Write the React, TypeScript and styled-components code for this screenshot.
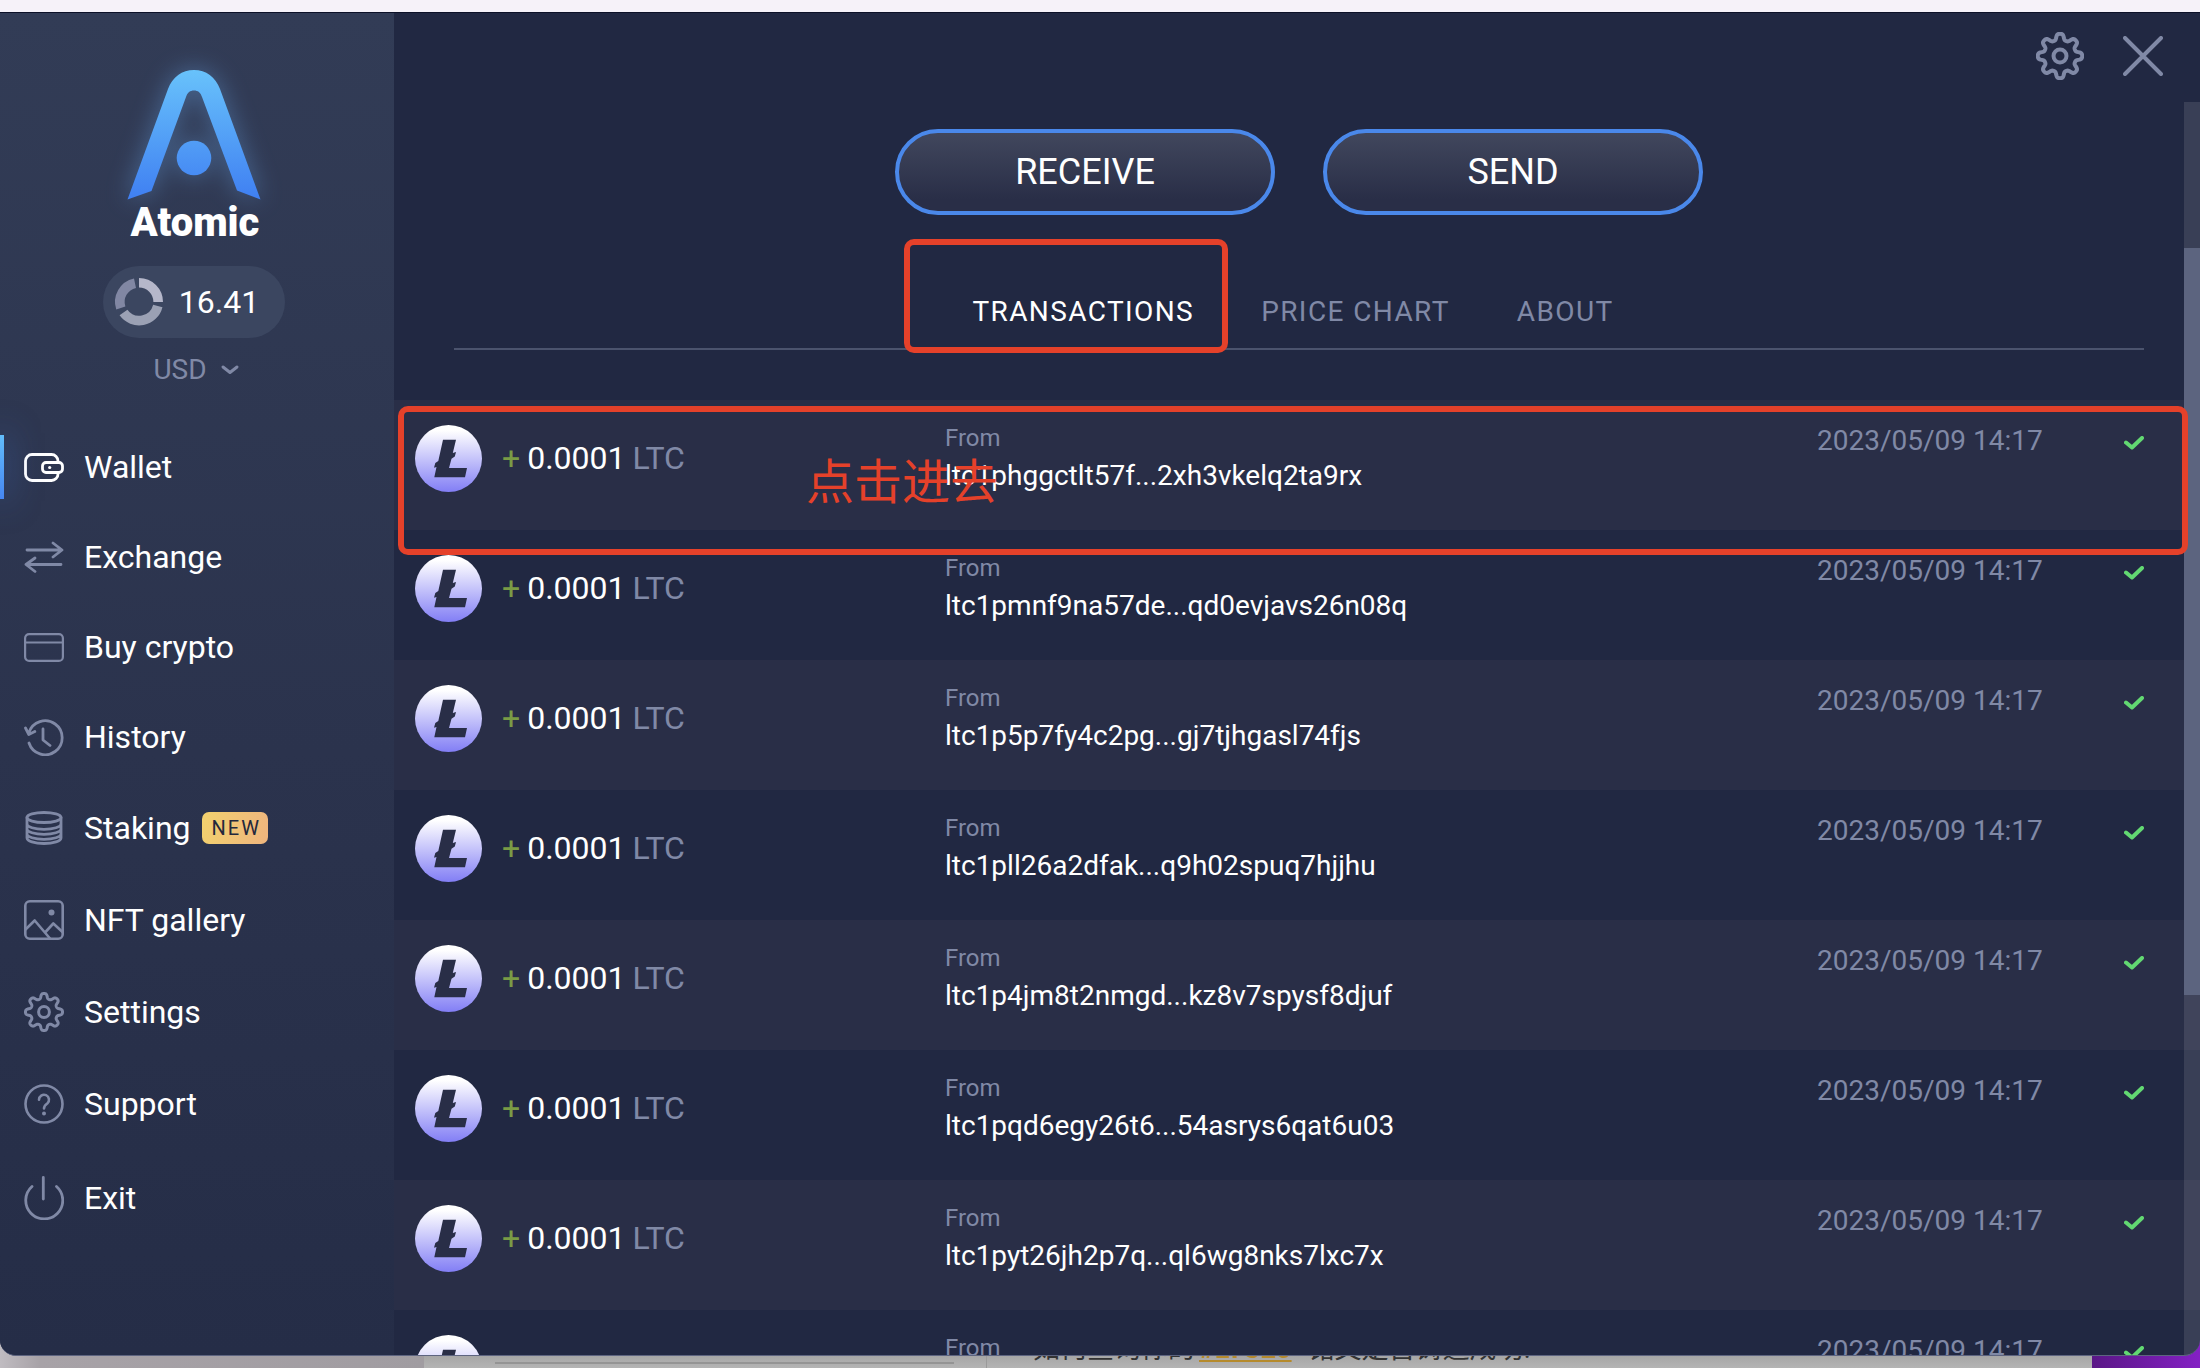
import React from "react";
import styled, { createGlobalStyle, css } from "styled-components";

const colors = {
  panel: "#212842",
  rowAlt: "#292e47",
  muted: "#8089a6",
  line: "#4b536d",
  blue: "#4a88ea",
  mark: "#e5412a",
  green: "#62d872",
  plus: "#7a9b45",
};

const GlobalStyle = createGlobalStyle`
  *, *::before, *::after { box-sizing: border-box; }
  body {
    margin: 0;
    overflow: hidden;
    background: #f6f2f9;
    font-family: Roboto, "Noto Sans CJK SC", sans-serif;
    color: #ffffff;
  }
  button { font: inherit; color: inherit; background: none; border: 0; padding: 0; cursor: pointer; }
  a { color: inherit; text-decoration: none; }
  svg { display: block; }
`;

/* ---------- desktop ---------- */

const Desktop = styled.div`
  display: grid;
  grid-template: 100vh / minmax(0, 1fr);
  > * { grid-area: 1 / 1; }
`;

const Backdrop = styled.div`
  align-self: end;
  height: 40px;
  display: grid;
  grid-template-columns: 424px minmax(0, 1fr) 108px;
  overflow: hidden;
`;

const BackdropEdge = styled.div`
  background: linear-gradient(90deg, #c0bcc1 0, #a7a2a7 40px, #a09ca1 100%);
`;

const BackdropPage = styled.div`
  display: grid;
  grid-template-columns: 563px minmax(0, 1fr);
  background: linear-gradient(#a6a6a6 28px, #b4b4b4 40px);
`;

const BackdropColumn = styled.div`
  border-right: 1px solid #9a9a9a;
  padding: 34px 32px 0 71px;
`;

const BackdropRule = styled.div`
  height: 2px;
  background: #949494;
`;

const BackdropText = styled.p`
  margin: 0;
  padding: 8px 0 0 46px;
  font-size: 27px;
  line-height: 26px;
  white-space: nowrap;
  color: #333333;
  a {
    margin: 0 16px 0 4px;
    font-weight: 700;
    color: #b58a2c;
    text-decoration: underline;
    text-decoration-thickness: 2px;
    text-underline-offset: 2px;
  }
`;

const BackdropAccent = styled.div`
  background: linear-gradient(90deg, #5a1786, #8420c4);
`;

const AppWindow = styled.div`
  position: relative;
  margin: 12px 0;
  display: grid;
  grid-template-columns: 394px minmax(0, 1fr);
  border-top: 1px solid #0c1128;
  border-bottom: 1px solid #5d6480;
  border-radius: 0 0 16px 16px;
  overflow: hidden;
  background: ${colors.panel};
`;

/* ---------- sidebar ---------- */

const Sidebar = styled.aside`
  display: flex;
  flex-direction: column;
  align-items: stretch;
  background: linear-gradient(#323c56, #2b334d 55%, #252d47);
`;

const Brand = styled.div`
  display: flex;
  flex-direction: column;
  align-items: center;
  padding: 57px 6px 0 0;
  svg { overflow: visible; }
`;

const BrandName = styled.div`
  margin-top: 1px;
  padding-left: 2px;
  font-size: 40px;
  line-height: 44px;
  font-weight: 900;
`;

const Balance = styled.button`
  display: flex;
  align-items: center;
  gap: 16px;
  height: 72px;
  margin-top: 21px;
  padding: 0 26px 0 12px;
  border-radius: 36px;
  background: #3b4660;
  font-size: 32px;
  line-height: 38px;
`;

const Currency = styled.button`
  display: flex;
  align-items: center;
  gap: 14px;
  margin-top: 16px;
  padding-left: 4px;
  font-size: 28px;
  line-height: 32px;
  color: ${colors.muted};
`;

const Nav = styled.nav`
  display: flex;
  flex-direction: column;
  margin-top: 36px;
`;

const NavLink = styled.a<{ $active?: boolean }>`
  position: relative;
  display: flex;
  align-items: center;
  gap: 20px;
  padding: 26px 24px;
  font-size: 32px;
  line-height: 38px;
  svg { color: ${(p) => (p.$active ? "#ffffff" : colors.muted)}; }
  ${(p) =>
    p.$active &&
    css`
      &::before {
        content: "";
        position: absolute;
        left: 0;
        top: 13px;
        bottom: 13px;
        width: 4px;
        background: linear-gradient(#62bdfb, #4686f2);
        box-shadow: 0 0 32px 2px rgba(70, 134, 242, 0.5);
      }
    `}
`;

const NavLabel = styled.span`
  display: flex;
  align-items: center;
  gap: 11px;
`;

const Badge = styled.span`
  margin: 4px 0;
  padding: 0 7px 0 10px;
  border-radius: 7px;
  background: linear-gradient(100deg, #f2d16e, #efb57e);
  color: #23283c;
  font-size: 20px;
  line-height: 32px;
  letter-spacing: 2px;
`;

/* ---------- main ---------- */

const Main = styled.main`
  display: grid;
  grid-template-rows: 89px minmax(0, 1fr);
  min-height: 0;
`;

const TopBar = styled.header`
  display: flex;
  justify-content: flex-end;
  align-items: center;
  gap: 39px;
  padding: 0 37px 4px 0;
  color: ${colors.muted};
`;

const Content = styled.div`
  position: relative;
  min-height: 0;
  overflow: hidden;
`;

const Scrollbar = styled.div`
  position: absolute;
  z-index: 1;
  top: 0;
  right: 0;
  bottom: 0;
  width: 16px;
  padding-top: 146px;
  background: rgba(255, 255, 255, 0.11);
`;

const Thumb = styled.div`
  height: 67.5%;
  background: #5c647f;
`;

const Overview = styled.section`
  padding: 27px 56px 0 60px;
`;

const Actions = styled.div`
  display: flex;
  justify-content: center;
  gap: 48px;
`;

const ActionButton = styled.button`
  width: 380px;
  height: 86px;
  border: 4px solid ${colors.blue};
  border-radius: 43px;
  background: linear-gradient(#41475d, #292e47 85%);
  font-size: 36px;
  line-height: 40px;
`;

const Tabs = styled.div`
  display: flex;
  justify-content: center;
  gap: 67px;
  padding: 81px 12px 20px 0;
  border-bottom: 2px solid ${colors.line};
`;

const Tab = styled.button<{ $active?: boolean }>`
  position: relative;
  font-size: 28px;
  line-height: 32px;
  letter-spacing: 0.05em;
  color: ${(p) => (p.$active ? "#ffffff" : colors.muted)};
`;

const Mark = styled.span`
  position: absolute;
  z-index: 2;
  border: 6px solid ${colors.mark};
  border-radius: 10px;
  pointer-events: none;
`;

const TabMark = styled(Mark)`
  inset: -57px -34px -25px -68px;
`;

const Transactions = styled.section`
  position: relative;
  margin-top: 50px;
`;

const RowMark = styled(Mark)`
  top: 6px;
  left: 4px;
  right: 12px;
  height: 149px;
`;

const MarkText = styled.span`
  position: absolute;
  top: 43px;
  left: 412px;
  font-size: 48px;
  line-height: 70px;
  font-family: "Noto Sans CJK SC", sans-serif;
  color: ${colors.mark};
`;

const Table = styled.table`
  width: 100%;
  table-layout: fixed;
  border-collapse: collapse;
  tr { height: 130px; }
  tr:nth-child(odd) { background: ${colors.rowAlt}; }
  td { vertical-align: top; padding: 0; white-space: nowrap; }
`;

const CoinCell = styled.td`
  svg { margin: 25px 0 0 21px; }
`;

const Amount = styled.div`
  display: flex;
  gap: 7px;
  margin-top: 39px;
  font-size: 32px;
  line-height: 38px;
`;

const Plus = styled.span`
  color: ${colors.plus};
`;

const Unit = styled.span`
  color: ${colors.muted};
`;

const Label = styled.div`
  margin-top: 24px;
  font-size: 24px;
  line-height: 28px;
  color: ${colors.muted};
`;

const Address = styled.div`
  margin-top: 8px;
  font-size: 28px;
  line-height: 32px;
`;

const When = styled.time`
  display: block;
  margin-top: 25px;
  font-size: 28px;
  line-height: 32px;
  color: ${colors.muted};
`;

const StatusCell = styled.td`
  color: ${colors.green};
  svg { margin-top: 36px; }
`;

/* ---------- icons ---------- */

const gearPath = (c: number, mid: number, amp: number) => {
  const k = 1.7;
  const pts: string[] = [];
  for (let i = 0; i < 240; i++) {
    const t = (i / 240) * Math.PI * 2;
    const r = mid + (amp * Math.tanh(k * Math.cos(8 * t))) / Math.tanh(k);
    pts.push(`${(c + r * Math.sin(t)).toFixed(2)} ${(c - r * Math.cos(t)).toFixed(2)}`);
  }
  return `M${pts.join("L")}Z`;
};

type IconProps = { w?: number; h: number; sw?: number; children: React.ReactNode };
const Icon = ({ w = 40, h, sw = 3, children }: IconProps) => (
  <svg width={w} height={h} viewBox={`0 0 ${w} ${h}`} fill="none" stroke="currentColor" strokeWidth={sw} strokeLinecap="round" strokeLinejoin="round" aria-hidden="true">
    {children}
  </svg>
);

const WalletIcon = () => (
  <Icon h={29} sw={2.8}>
    <path d="M34 9.5V8a6.5 6.5 0 0 0-6.5-6.5H8A6.5 6.5 0 0 0 1.5 8v13A6.5 6.5 0 0 0 8 27.5H27.5A6.5 6.5 0 0 0 34 21V19.5" />
    <rect x="18.5" y="9.5" width="20" height="10" rx="3.5" />
    <circle cx="25.7" cy="14.5" r="1.6" fill="currentColor" stroke="none" />
  </Icon>
);
const ExchangeIcon = () => (
  <Icon h={32} sw={2.8}>
    <path d="M3 9H37M29 2l9 7-9 7M37 23.5H3M11 17l-9 6.5 9 7" />
  </Icon>
);
const CardIcon = () => (
  <Icon h={29} sw={2.2}>
    <rect x="1.1" y="1.1" width="37.8" height="26.8" rx="4" />
    <path d="M1 9.5H39" />
  </Icon>
);
const HistoryIcon = () => (
  <Icon h={38} sw={2.8}>
    <path d="M5 14.5A17 17 0 1 1 5 25M1.5 10l3.3 6.5 6-3M19 11v11l7 5.5" />
  </Icon>
);
const CoinsIcon = () => (
  <Icon h={34} sw={2.8}>
    <ellipse cx="20" cy="6.500" rx="17" ry="5" />
    <path d="M3 6.5V27c0 3 7.6 5.5 17 5.5S37 30 37 27V6.5M3 13c0 3 7.6 5.3 17 5.3S37 16 37 13M3 18c0 3 7.6 5.3 17 5.3S37 21 37 18M3 23c0 3 7.6 5.3 17 5.3S37 26 37 23" />
  </Icon>
);
const ImageIcon = () => (
  <Icon h={40} sw={2.6}>
    <rect x="1.3" y="1.3" width="37.4" height="37.4" rx="4.5" />
    <path d="M1.5 29.5L10.7 20.5 26 38.5M21.5 32L29.3 23.5 38.5 32" />
    <circle cx="27.5" cy="12.5" r="3" fill="currentColor" stroke="none" />
  </Icon>
);
const GearIcon = ({ size = 40, sw = 3 }: { size?: number; sw?: number }) => (
  <Icon w={size} h={size} sw={sw}>
    <path d={gearPath(size / 2, size * 0.4, size * 0.0625)} />
    <circle cx={size / 2} cy={size / 2} r={size * 0.135} />
  </Icon>
);
const HelpIcon = () => (
  <Icon h={40} sw={2.6}>
    <circle cx="20" cy="20" r="18.5" />
    <path d="M15 15.8a5 5 0 1 1 8.3 3.7C21.3 21 20 21.8 20 24.5" />
    <circle cx="20" cy="29.5" r="2" fill="currentColor" stroke="none" />
  </Icon>
);
const PowerIcon = () => (
  <Icon h={44} sw={2.8}>
    <path d="M19.3 1.5V23M8 10.5A18.5 18.5 0 1 0 32.5 10.5" />
  </Icon>
);
const CloseIcon = () => (
  <Icon h={40} sw={4}>
    <path d="M2 2L38 38M38 2L2 38" />
  </Icon>
);
const ChevronIcon = () => (
  <Icon w={18} h={10} sw={3}>
    <path d="M2 2l7 5.5L16 2" />
  </Icon>
);
const CheckIcon = () => (
  <Icon w={20} h={14} sw={4}>
    <path d="M2 6.5l6 5L18 2" />
  </Icon>
);

const LogoArt = styled.svg`
  filter: drop-shadow(0 0 12px rgba(110, 175, 245, 0.4));
`;

const Logo = () => (
  <LogoArt width="134" height="130" viewBox="0 0 134 130" aria-hidden="true">
    <defs>
      <linearGradient id="logoFill" x1="0" y1="0" x2="0" y2="130" gradientUnits="userSpaceOnUse">
        <stop offset="0" stopColor="#68c2fb" />
        <stop offset="1" stopColor="#3f7ff2" />
      </linearGradient>
    </defs>
    <path fill="url(#logoFill)" d="M0.5 129.5L41 19C45.5 7 55 0 67 0S88.5 7 93 19L133.5 129.5 110 120.5 75 27C73.5 22.5 71 20.5 67 20.5S60.5 22.5 59 27L24.5 121Z" />
    <circle cx="67" cy="88" r="17.3" fill="url(#logoFill)" />
  </LogoArt>
);

const Donut = () => (
  <svg width="48" height="48" viewBox="0 0 48 48" fill="none" strokeWidth="9.6" aria-hidden="true">
    <path d="M24 4.8A19.2 19.2 0 0 1 43.2 24" stroke="#b5b7ca" />
    <path d="M42.8 28A19.2 19.2 0 0 1 8.5 34.5" stroke="#9ba1b4" />
    <path d="M5.8 30A19.2 19.2 0 0 1 20 5.2" stroke="#8187a3" />
  </svg>
);

const Litecoin = () => (
  <svg width="67" height="67" viewBox="0 0 67 67" role="img" aria-label="Litecoin">
    <defs>
      <linearGradient id="ltcFill" x1="0" y1="0" x2="0" y2="1">
        <stop offset="0.08" stopColor="#ffffff" />
        <stop offset="1" stopColor="#827ef5" />
      </linearGradient>
    </defs>
    <circle cx="33.5" cy="33.5" r="33.5" fill="url(#ltcFill)" />
    <path fill="#292e47" d="M28 14.7H41L37.8 28 41 27 39.8 31.5 36.5 33.8 34 43H52L50 52.3H19.3L21.5 42 19 42.7 20.3 38 23.3 36Z" />
  </svg>
);

/* ---------- data ---------- */

const navItems = [
  { label: "Wallet", icon: <WalletIcon />, active: true },
  { label: "Exchange", icon: <ExchangeIcon /> },
  { label: "Buy crypto", icon: <CardIcon /> },
  { label: "History", icon: <HistoryIcon /> },
  { label: "Staking", icon: <CoinsIcon />, badge: "NEW" },
  { label: "NFT gallery", icon: <ImageIcon /> },
  { label: "Settings", icon: <GearIcon /> },
  { label: "Support", icon: <HelpIcon /> },
  { label: "Exit", icon: <PowerIcon /> },
];

const addresses = [
  "ltc1phggctlt57f...2xh3vkelq2ta9rx",
  "ltc1pmnf9na57de...qd0evjavs26n08q",
  "ltc1p5p7fy4c2pg...gj7tjhgasl74fjs",
  "ltc1pll26a2dfak...q9h02spuq7hjjhu",
  "ltc1p4jm8t2nmgd...kz8v7spysf8djuf",
  "ltc1pqd6egy26t6...54asrys6qat6u03",
  "ltc1pyt26jh2p7q...ql6wg8nks7lxc7x",
  "",
];

export default function App() {
  return (
    <>
      <GlobalStyle />
      <Desktop>
        <Backdrop>
          <BackdropEdge />
          <BackdropPage>
            <BackdropColumn>
              <BackdropRule />
            </BackdropColumn>
            <BackdropText>
              如何查询你的<a href="#ltc20">#LTC20</a>铭文是否铸造成功!
            </BackdropText>
          </BackdropPage>
          <BackdropAccent />
        </Backdrop>

        <AppWindow>
          <Sidebar>
            <Brand>
              <Logo />
              <BrandName>Atomic</BrandName>
              <Balance type="button">
                <Donut />
                16.41
              </Balance>
              <Currency type="button">
                USD
                <ChevronIcon />
              </Currency>
            </Brand>
            <Nav>
              {navItems.map((item) => (
                <NavLink key={item.label} href="#" $active={item.active}>
                  {item.icon}
                  <NavLabel>
                    {item.label}
                    {item.badge && <Badge>{item.badge}</Badge>}
                  </NavLabel>
                </NavLink>
              ))}
            </Nav>
          </Sidebar>

          <Main>
            <TopBar>
              <button type="button" aria-label="Settings">
                <GearIcon size={48} sw={4} />
              </button>
              <button type="button" aria-label="Close">
                <CloseIcon />
              </button>
            </TopBar>
            <Content>
              <Overview>
                <Actions>
                  <ActionButton type="button">RECEIVE</ActionButton>
                  <ActionButton type="button">SEND</ActionButton>
                </Actions>
                <Tabs role="tablist">
                  <Tab type="button" role="tab" aria-selected="true" $active>
                    TRANSACTIONS
                    <TabMark />
                  </Tab>
                  <Tab type="button" role="tab" aria-selected="false">
                    PRICE CHART
                  </Tab>
                  <Tab type="button" role="tab" aria-selected="false">
                    ABOUT
                  </Tab>
                </Tabs>
              </Overview>
              <Transactions>
                <Table>
                  <colgroup>
                    <col width="108" />
                    <col width="443" />
                    <col />
                    <col width="307" />
                    <col width="76" />
                  </colgroup>
                  <tbody>
                    {addresses.map((address, i) => (
                      <tr key={i}>
                        <CoinCell>
                          <Litecoin />
                        </CoinCell>
                        <td>
                          <Amount>
                            <Plus>+</Plus>
                            <span>0.0001</span>
                            <Unit>LTC</Unit>
                          </Amount>
                        </td>
                        <td>
                          <Label>From</Label>
                          <Address>{address}</Address>
                        </td>
                        <td>
                          <When>2023/05/09 14:17</When>
                        </td>
                        <StatusCell>
                          <CheckIcon />
                        </StatusCell>
                      </tr>
                    ))}
                  </tbody>
                </Table>
                <RowMark />
                <MarkText>点击进去</MarkText>
              </Transactions>
              <Scrollbar>
                <Thumb />
              </Scrollbar>
            </Content>
          </Main>
        </AppWindow>
      </Desktop>
    </>
  );
}
